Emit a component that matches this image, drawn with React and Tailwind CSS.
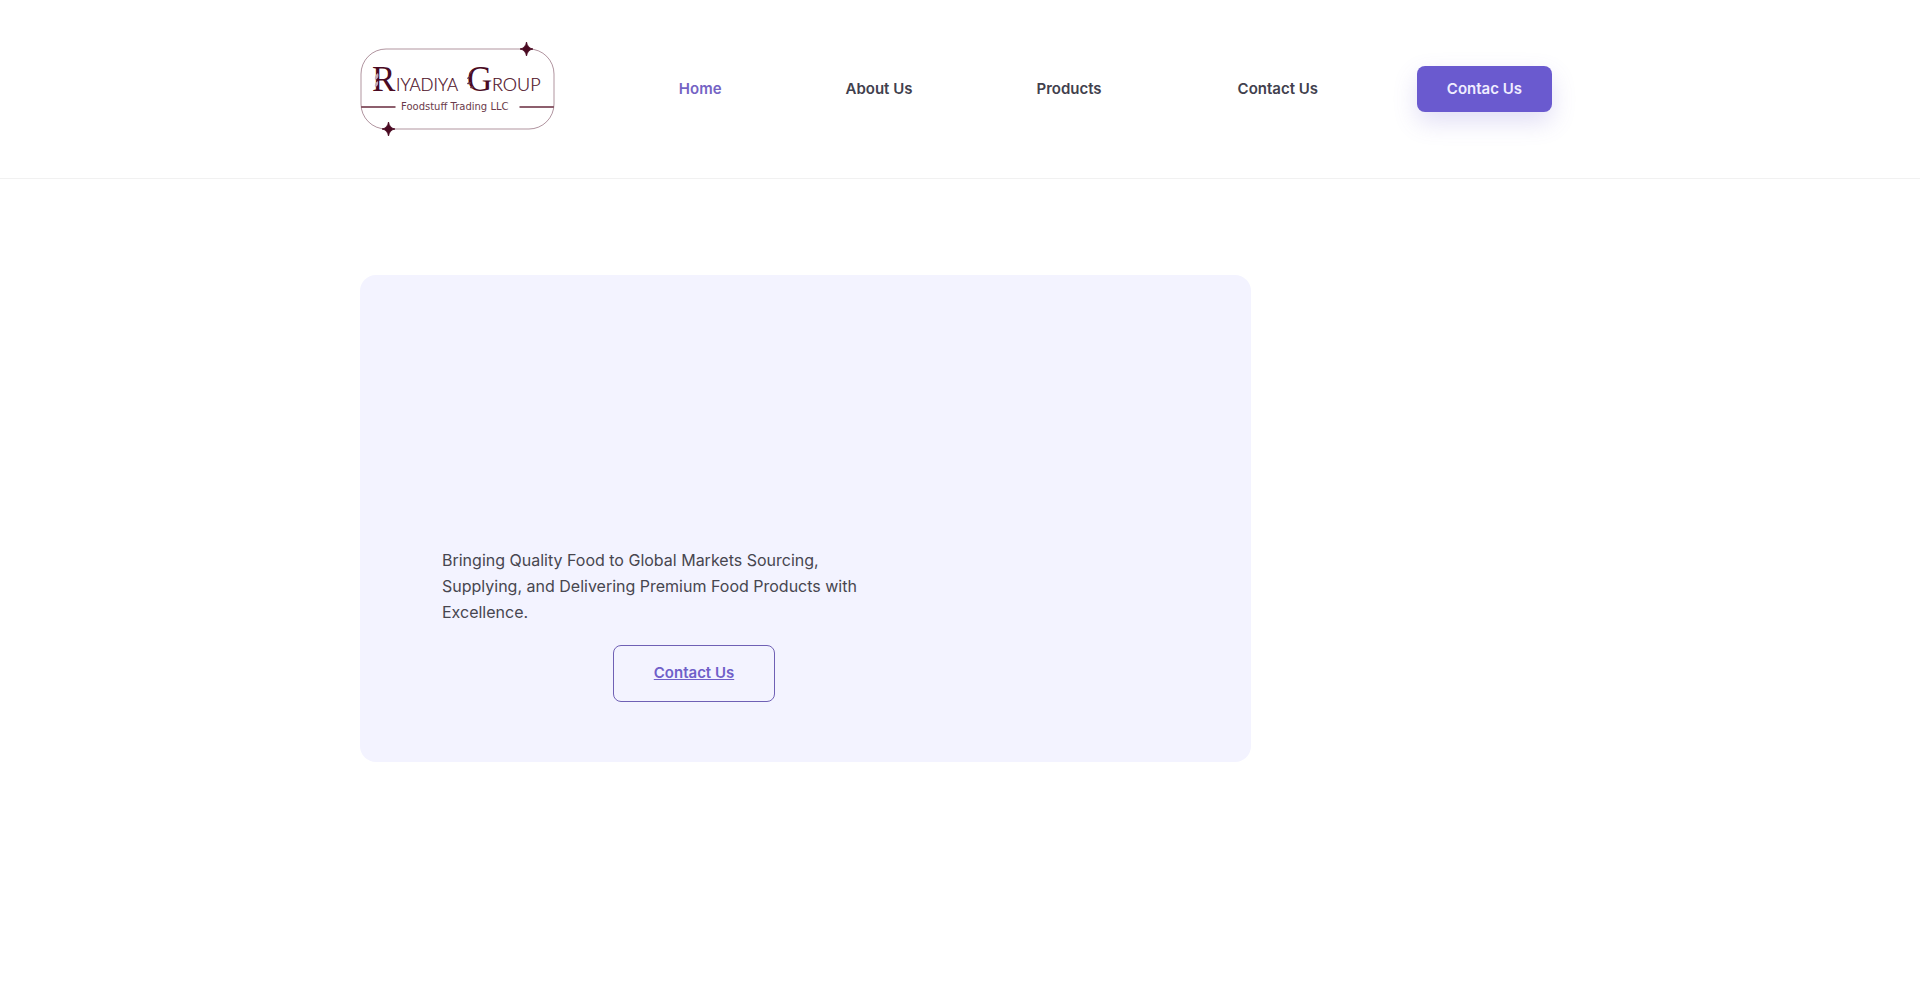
import React from 'react';

const navLinks = [
    { label: 'Home', href: '#home', active: true },
    { label: 'About Us', href: '#about' },
    { label: 'Products', href: '#products' },
    { label: 'Contact Us', href: '#contact' },
];

function Logo() {
    return (
        <svg viewBox="0 0 196 98" className="w-[196px] h-[98px]" role="img" aria-label="Riyadiya Group">
            {/* Frame */}
            <rect x="1" y="9" width="193" height="80" rx="25" fill="none" stroke="#4a0a22" strokeOpacity="0.55" strokeWidth="0.8" />

            {/* Divider lines */}
            <path d="M1 67H35.500M159.500 67H194" stroke="#8d5f6d" strokeWidth="2" />

            {/* Stars */}
            <path d="M166.500 2Q167.500 8 173 9Q167.500 10 166.500 16Q165.500 10 160 9Q165.500 8 166.500 2Z" fill="#4a0a22" stroke="#4a0a22" strokeWidth="0.800" />
            <path d="M28.500 82Q29.500 88 35 89Q29.500 90 28.500 96Q27.500 90 22 89Q27.500 88 28.500 82Z" fill="#4a0a22" stroke="#4a0a22" strokeWidth="0.800" />

            {/* Name */}
            <g fill="#4a0a22">
                <text x="12" y="51" fontSize="35" fontFamily="'Liberation Serif', serif">R</text>
                <text x="36" y="51" fontSize="17" fontFamily="Lato, sans-serif" fontWeight="300" stroke="#4a0a22" strokeWidth="0.2">IYADIYA</text>
                <text x="107" y="51" fontSize="35" fontFamily="'Liberation Serif', serif">G</text>
                <text x="132" y="51" fontSize="18" fontFamily="Lato, sans-serif" fontWeight="300" stroke="#4a0a22" strokeWidth="0.2">ROUP</text>
            </g>

            {/* Leaves on the two capitals */}
            <path d="M18 33q-4 3-3 7q5-2 3-7M18 41q-4 2-3 6q4-1 3-6" fill="#c4a9b1" />
            <path d="M112 31q-3 1-3 3q3 0 3-3M110 36q-3 1-3 3q3 0 3-3M111 42q-4 0-4 2q4 1 4-2M114 46q-4 0-4 2q4 1 4-2" fill="#6b3547" />

            <text x="41" y="70" fontSize="10" fill="#6b3a4a" fontFamily="'DejaVu Sans', sans-serif">Foodstuff Trading LLC</text>
        </svg>
    );
}

function Header() {
    return (
        <header className="border-b border-[#f1f1f1]">
            <div className="max-w-[1200px] mx-auto py-10 pr-2 flex items-center justify-between">
                <a href="#home" className="shrink-0">
                    <Logo />
                </a>

                <nav className="ml-6 flex items-center gap-[124px] text-[15px] font-semibold text-[#41404d]">
                    {navLinks.map((link) => (
                        <a key={link.label} href={link.href} className={link.active ? 'text-[#7463c4]' : 'last:ml-3'}>
                            {link.label}
                        </a>
                    ))}
                </nav>

                <button
                    type="button"
                    className="h-[46px] px-[30px] rounded-lg bg-[#6a5acf] text-[15px] font-semibold text-[#f0edff] shadow-[0_10px_25px_rgba(106,90,207,0.2)]"
                >
                    Contac Us
                </button>
            </div>
        </header>
    );
}

function Hero() {
    return (
        <main className="max-w-[1200px] mx-auto pt-24">
            <section className="max-w-[891px] rounded-2xl bg-[#f3f3ff] px-[82px] pt-[272px] pb-[60px]">
                <div className="max-w-[504px]">
                    <p className="max-w-[420px] text-base leading-[26px] text-[#47464f]">
                        Bringing Quality Food to Global Markets Sourcing, Supplying, and Delivering Premium Food Products with Excellence.
                    </p>
                    <div className="mt-5 flex justify-center">
                        <a
                            href="#contact"
                            className="h-[57px] px-10 flex items-center rounded-lg border border-[#6f60b5] text-[15px] font-semibold text-[#6f5fc9] underline"
                        >
                            Contact Us
                        </a>
                    </div>
                </div>
            </section>
        </main>
    );
}

export default function App() {
    return (
        <div className="min-h-screen bg-white font-['Inter',sans-serif]">
            <Header />
            <Hero />
        </div>
    );
}
